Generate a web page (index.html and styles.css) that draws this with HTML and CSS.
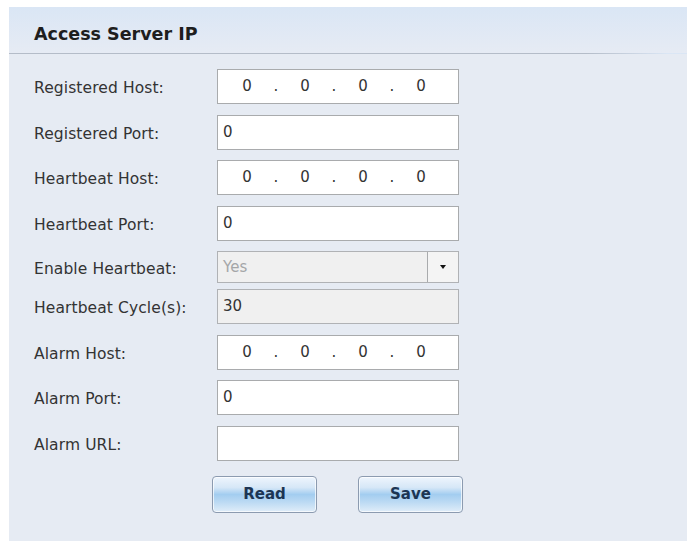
FILE: index.html
```html
<!DOCTYPE html>
<html lang="en">
<head>
    <meta charset="UTF-8">
    <title>Access Server IP</title>
    <link rel="stylesheet" href="styles.css">
</head>
<body>
    <div class="panel">
        <div class="panel-header">Access Server IP</div>

        <div class="form">
            <label>Registered Host:</label>
            <div class="field ip"><span>0</span><i>.</i><span>0</span><i>.</i><span>0</span><i>.</i><span>0</span></div>

            <label>Registered Port:</label>
            <div class="field">0</div>

            <label>Heartbeat Host:</label>
            <div class="field ip"><span>0</span><i>.</i><span>0</span><i>.</i><span>0</span><i>.</i><span>0</span></div>

            <label>Heartbeat Port:</label>
            <div class="field">0</div>

            <label class="short">Enable Heartbeat:</label>
            <div class="field select disabled">
                <span class="select-value">Yes</span>
                <span class="select-arrow"></span>
            </div>

            <label>Heartbeat Cycle(s):</label>
            <div class="field disabled">30</div>

            <label>Alarm Host:</label>
            <div class="field ip"><span>0</span><i>.</i><span>0</span><i>.</i><span>0</span><i>.</i><span>0</span></div>

            <label>Alarm Port:</label>
            <div class="field">0</div>

            <label>Alarm URL:</label>
            <div class="field"></div>
        </div>

        <div class="actions">
            <button class="btn">Read</button>
            <button class="btn">Save</button>
        </div>
    </div>
</body>
</html>
```

FILE: styles.css
```css
body {
    margin: 0;
    background-color: #ffffff;
    font-family: "DejaVu Sans", Verdana, sans-serif;
    color: #333;
}

.panel {
    margin: 7px 3px 2px 9px;
    height: 534px;
    background-color: #e6ebf3;
    box-sizing: border-box;
}

.panel-header {
    height: 46px;
    padding-left: 25px;
    line-height: 54px;
    font-size: 17.5px;
    font-weight: bold;
    color: #1e1e1e;
    background: linear-gradient(to bottom, #dae6f5, #e6ebf4);
    border-bottom: 1px solid transparent;
    border-image: linear-gradient(to right, #b4bcc8 0%, #b4bcc8 85%, rgba(180, 188, 200, 0) 97%) 1;
}

.form {
    display: grid;
    grid-template-columns: 183px 242px;
    row-gap: 10.5px;
    padding: 15px 0 0 25px;
}

.form label {
    font-size: 15.5px;
    letter-spacing: 0.1px;
    color: #333;
    display: flex;
    align-items: center;
    height: 35px;
    padding-top: 3px;
    box-sizing: border-box;
}

.form label.short {
    height: 32px;
    margin-bottom: -4.5px;
}

.field {
    height: 35px;
    box-sizing: border-box;
    background-color: #ffffff;
    border: 1px solid #a9abad;
    padding: 0 5px;
    font-size: 15px;
    line-height: 33px;
    color: #333;
}

.field.disabled {
    background-color: #f0f0f0;
    border-color: #b0b2b5;
}

.ip {
    display: flex;
    padding: 0 0 0 14px;
}

.ip span {
    width: 30px;
    text-align: center;
}

.ip i {
    font-style: normal;
    width: 28px;
    text-align: center;
}

.select {
    height: 32px;
    margin-bottom: -4.5px;
    display: flex;
    padding: 0 0 0 5px;
    line-height: 30px;
}

.select-value {
    flex: 1;
    color: #a4a6a8;
}

.select-arrow {
    width: 30px;
    border-left: 1px solid #a9abad;
    background-color: #f4f4f4;
    position: relative;
}

.select-arrow::after {
    content: "";
    position: absolute;
    left: 12px;
    top: 13px;
    border-left: 3px solid transparent;
    border-right: 3px solid transparent;
    border-top: 4px solid #111;
}

.actions {
    display: flex;
    gap: 41px;
    padding: 15px 0 0 203px;
}

.btn {
    width: 105px;
    height: 37px;
    border: 1px solid #8c9bb0;
    border-radius: 4px;
    background: linear-gradient(to bottom, #eef5fd 0%, #d6e7f7 30%, #a3cdf0 50%, #bcdaf3 72%, #e0edf9 100%);
    font-family: "DejaVu Sans", Verdana, sans-serif;
    font-size: 15px;
    font-weight: bold;
    color: #1c3553;
    box-shadow: inset 0 0 0 1px rgba(255, 255, 255, 0.7);
}
```
